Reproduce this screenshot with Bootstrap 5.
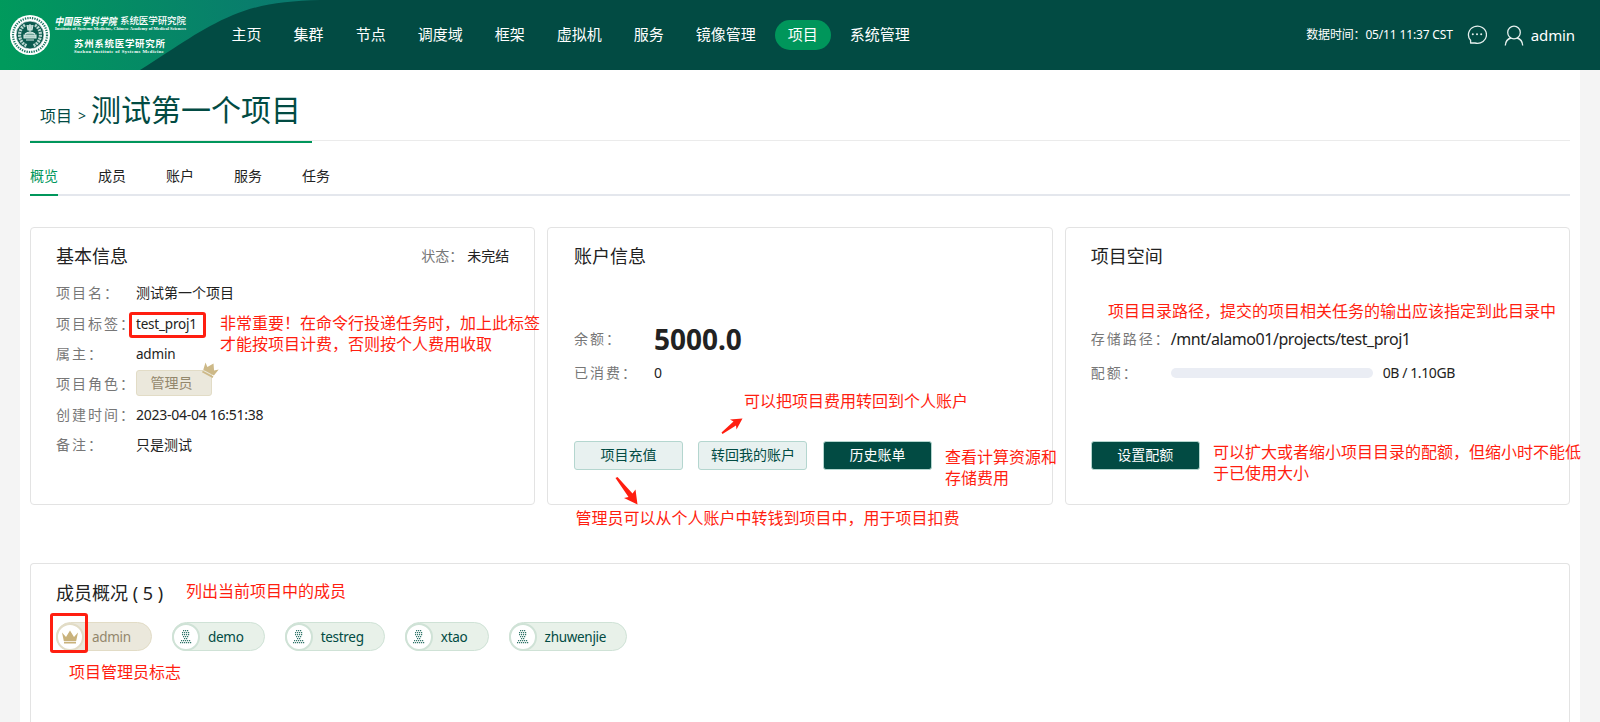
<!DOCTYPE html>
<html lang="zh-CN">
<head>
<meta charset="utf-8">
<meta name="viewport" content="width=device-width, initial-scale=1">
<title>测试第一个项目</title>
<link href="https://cdn.jsdelivr.net/npm/bootstrap@5.3.0/dist/css/bootstrap.min.css" rel="stylesheet">
<style>
body{font-family:"Noto Sans","Noto Sans CJK SC",sans-serif;font-size:14px;line-height:20px;color:#222;background:#f4f4f4;height:722px;overflow:hidden;position:relative}
.topbar{height:70px;background:#024b43;color:#fff}
.brand{width:218.6px;height:70px}
.brand svg{display:block;overflow:visible}
.mainnav{gap:6px;font-size:15px}
.mainnav .nav-link{color:#fff;padding:0 13px;height:30px;line-height:29px;border-radius:15px}
.mainnav .nav-link.active{background:#00965b}
.clock{font-size:12px;letter-spacing:-.16px}
.username{font-size:15px;letter-spacing:-.1px}
.userbar{padding-right:25px}
.page{margin:0 20px;padding:0 10px;background:#fff;height:652px}
.crumbs{height:71px;border-bottom:1px solid #ebebeb;color:#024b43}
.crumb-in{width:282px;height:73px;border-bottom:2px solid #00965b;padding:8px 0 0 10px}
.crumb-in .up{font-size:16px;line-height:20px;margin-top:12px}
.crumb-in .sep{font-size:14px;line-height:20px;margin:12px 5px 0 6px}
.crumb-in h1{font-size:30px;line-height:40px;font-weight:400;margin:1px 0 0}
.subtabs{height:55px;border-bottom:2px solid #e4e7ed;gap:40px}
.subtabs .nav-link{padding:0;height:55px;line-height:70px;color:#222;border-bottom:2px solid transparent}
.subtabs .nav-link.active{color:#00965b;border-color:#00965b}
.tiles{margin-top:31px;display:grid;grid-template-columns:repeat(3,1fr);column-gap:12px}
.tile{border:1px solid #e3e3e3;border-radius:4px;padding:0 25px;height:278px}
.tile h2{font-size:18px;line-height:24px;font-weight:400;margin:0}
.tilehead{height:50px;padding-top:6px}
.lbl{color:#777;letter-spacing:2px;width:80px;flex:none;white-space:nowrap}
.info .d-flex{height:30.4px}
.latin{font-size:13.5px;letter-spacing:-.2px}
.date{letter-spacing:-.27px}
.path{font-size:16px;letter-spacing:-.44px}
.size{letter-spacing:-.4px;margin-left:10px}
.role{width:76px;height:26px;background:#ebe8dc;border:1px solid #e2dcc6;border-radius:3px;color:#93876c;line-height:24px;text-align:center;position:relative;top:-1px;padding-right:5px}
.role svg{position:absolute;right:-8px;top:-10px}
.money{font-size:28px;font-weight:700}
.btn-x{--bs-btn-font-size:14px;--bs-btn-line-height:20px;--bs-btn-padding-y:0;--bs-btn-padding-x:0;--bs-btn-border-radius:3px;--bs-btn-border-color:#b4d6cf;--bs-btn-bg:#e8f1f0;--bs-btn-color:#024b43;width:109px;height:29px;padding-bottom:1px}
.btn-deep{--bs-btn-bg:#024b43;--bs-btn-color:#fff}
.actions{gap:15.5px;margin-top:51px}
.quota{width:202px;height:10px;border-radius:5px;background:#eaedf4;margin-top:-1px}
.account{padding-left:25.6px}
.team{margin-top:58px;height:160px;border-bottom:0}
.members{gap:20px}
.person{height:29px;border:1px solid #cfe2d6;border-radius:15px;background:#e8f1e9;color:#024b43;padding-right:20.2px;font-size:13.5px;letter-spacing:-.3px}
.person .face{width:28px;height:28px;margin-left:-1px;border:2px solid #cfe2d6;border-radius:50%;background:#fff;display:flex;align-items:center;justify-content:center;margin-right:8px}
.person.boss{background:#ebe8dc;border-color:#e2dcc6;color:#93876c}
.person.boss .face{border-color:#e2dcc6}
.note{position:absolute;color:#ff1e10;font-size:16px;line-height:21px;white-space:nowrap}
.ring{position:absolute;border:3px solid #ff1e10;border-radius:3px}
.arrow{position:absolute}
</style>
</head>
<body>
<header class="topbar d-flex align-items-center">
  <div class="brand flex-shrink-0">
    <svg width="320" height="70" viewBox="0 0 320 70">
      <defs><linearGradient id="g" gradientUnits="userSpaceOnUse" x1="0" y1="35" x2="280" y2="0"><stop offset="0" stop-color="#009a5c"/><stop offset="1" stop-color="#0a7a6e"/></linearGradient></defs>
      <path d="M0 0H320C285 1 260 4 233 15C200 29 180 45 140 70H0Z" fill="url(#g)"/>
      <circle cx="30" cy="35" r="20" fill="#fff"/>
      <circle cx="30" cy="35" r="17" fill="none" stroke="#1c7763" stroke-width="2.2" stroke-dasharray="1.3 1.1"/>
      <circle cx="30" cy="35" r="14" fill="#0b5a4e" stroke="#fff" stroke-width=".7"/>
      <path d="M25 25C17 30 18 42 27 46M35 25C43 30 42 42 33 46" fill="none" stroke="#b9d6cf" stroke-width="3.2" stroke-dasharray="2 .9"/>
      <path d="M27 25l1 5h4l1-5M30 24v8M24 35h12v3H24zM25 34q5-4 10 0M26 40h8" fill="#a9cdc4" stroke="#d5e8e3" stroke-width="1.1"/>
      <g fill="#fff" font-family="'Liberation Serif','Noto Sans CJK SC',serif">
        <text x="54.500" y="24.500" font-size="10" font-weight="700" font-style="italic" textLength="62" lengthAdjust="spacingAndGlyphs">中国医学科学院</text>
        <text x="120" y="24" font-size="9.500" font-weight="500" textLength="66">系统医学研究院</text>
        <text x="55" y="30" font-size="4.600" font-weight="700" textLength="131" lengthAdjust="spacingAndGlyphs">Institute of Systems Medicine, Chinese Academy of Medical Sciences</text>
        <text x="74" y="46.500" font-size="9.500" font-weight="700" textLength="91">苏州系统医学研究所</text>
        <text x="74" y="52.500" font-size="4.800" font-weight="700" textLength="90">Suzhou Institute of Systems Medicine</text>
      </g>
    </svg>
  </div>
  <nav class="nav mainnav position-relative">
    <a class="nav-link">主页</a><a class="nav-link">集群</a><a class="nav-link">节点</a><a class="nav-link">调度域</a><a class="nav-link">框架</a><a class="nav-link">虚拟机</a><a class="nav-link">服务</a><a class="nav-link">镜像管理</a><a class="nav-link active">项目</a><a class="nav-link">系统管理</a>
  </nav>
  <div class="userbar ms-auto d-flex align-items-center">
    <span class="clock">数据时间：05/11 11:37 CST</span>
    <svg width="20" height="20" viewBox="0 0 20 20" fill="none" stroke="#e6f0ee" stroke-width="1.300" style="margin-left:14px"><path d="M3.600 15.300A9 8.600 0 1 1 8 18H3.600Z" stroke-linejoin="round"/><g fill="#e6f0ee" stroke="none"><circle cx="5.800" cy="9.300" r="1"/><circle cx="10" cy="9.300" r="1"/><circle cx="14.200" cy="9.300" r="1"/></g></svg>
    <svg width="20" height="21" viewBox="0 0 20 21" fill="none" stroke="#e6f0ee" stroke-width="1.300" style="margin:0 7px 0 17px"><circle cx="10" cy="7.500" r="6.300"/><path d="M1.300 20.500C1.500 16.500 4 13.800 7 13M18.700 20.500C18.500 16.500 16 13.800 13 13"/></svg>
    <span class="username">admin</span>
  </div>
</header>

<main class="page">
  <div class="crumbs">
    <div class="crumb-in d-flex align-items-center">
      <span class="up">项目</span><span class="sep">&gt;</span><h1>测试第一个项目</h1>
    </div>
  </div>
  <nav class="nav subtabs">
    <a class="nav-link active">概览</a><a class="nav-link">成员</a><a class="nav-link">账户</a><a class="nav-link">服务</a><a class="nav-link">任务</a>
  </nav>

  <div class="tiles">
    <section class="tile">
      <div class="tilehead d-flex align-items-center justify-content-between">
        <h2>基本信息</h2>
        <div><span style="color:#777">状态：</span><span class="ms-1">未完结</span></div>
      </div>
      <div class="info">
        <div class="d-flex align-items-center"><span class="lbl">项目名：</span><span>测试第一个项目</span></div>
        <div class="d-flex align-items-center"><span class="lbl">项目标签：</span><span class="latin">test_proj1</span></div>
        <div class="d-flex align-items-center"><span class="lbl">属主：</span><span class="latin">admin</span></div>
        <div class="d-flex align-items-center"><span class="lbl">项目角色：</span><span class="role">管理员<svg width="18" height="17" viewBox="0 0 18 17"><g transform="rotate(28 9 9)" fill="#cdb988"><path d="M1.500 4.500l3.700 3L9 1.500l3.800 6 3.700-3-1.500 7.500H3zM3 13h12v1.800H3z"/></g></svg></span></div>
        <div class="d-flex align-items-center"><span class="lbl">创建时间：</span><span class="date">2023-04-04 16:51:38</span></div>
        <div class="d-flex align-items-center"><span class="lbl">备注：</span><span>只是测试</span></div>
      </div>
    </section>

    <section class="tile account">
      <div class="tilehead d-flex align-items-center"><h2>账户信息</h2></div>
      <div class="d-flex align-items-center" style="height:34px;margin-top:44px"><span class="lbl">余额：</span><span class="money">5000.0</span></div>
      <div class="d-flex align-items-center" style="height:34px"><span class="lbl">已消费：</span><span>0</span></div>
      <div class="actions d-flex"><button class="btn btn-x">项目充值</button><button class="btn btn-x">转回我的账户</button><button class="btn btn-x btn-deep">历史账单</button></div>
    </section>

    <section class="tile">
      <div class="tilehead d-flex align-items-center"><h2>项目空间</h2></div>
      <div class="d-flex align-items-center" style="height:34px;margin-top:44px"><span class="lbl">存储路径：</span><span class="path">/mnt/alamo01/projects/test_proj1</span></div>
      <div class="d-flex align-items-center" style="height:34px"><span class="lbl">配额：</span><div class="quota"></div><span class="size">0B / 1.10GB</span></div>
      <div class="actions d-flex"><button class="btn btn-x btn-deep">设置配额</button></div>
    </section>
  </div>

  <section class="tile team rounded-bottom-0">
    <div class="d-flex align-items-center" style="height:58px"><h2>成员概况 ( 5 )</h2></div>
    <div class="members d-flex">
      <div class="person boss d-flex align-items-center"><span class="face"><svg width="18" height="16" viewBox="0 0 18 16" fill="#c9b27c"><path d="M1 3.500l4 4.500L9 1.500l4 6.500 4-4.500-1.800 8.500H2.800zM3 12.800h12v1.600H3z"/></svg></span>admin</div>
      <div class="person d-flex align-items-center"><span class="face"><svg width="12" height="14"><use href="#u"/></svg></span>demo</div>
      <div class="person d-flex align-items-center"><span class="face"><svg width="12" height="14"><use href="#u"/></svg></span>testreg</div>
      <div class="person d-flex align-items-center"><span class="face"><svg width="12" height="14"><use href="#u"/></svg></span>xtao</div>
      <div class="person d-flex align-items-center"><span class="face"><svg width="12" height="14"><use href="#u"/></svg></span>zhuwenjie</div>
    </div>
  </section>
</main>

<!-- dotted user glyph shared by the member chips -->
<svg width="0" height="0" class="position-absolute"><defs>
  <g id="u" stroke="#2f7468" stroke-width="1.200" stroke-dasharray="1.200 .8" fill="none"><path d="M3 .6h5.200"/><path d="M2 2.600h7.200"/><path d="M2 4.600h7.200"/><path d="M3 6.600h5.200"/><path d="M4 8.600h3.200"/><path d="M1 10.600h9.200"/><path d="M0 12.600h11.200"/></g>
</defs></svg>

<!-- annotations laid over the page -->
<div class="ring" style="left:129px;top:312px;width:77px;height:26px"></div>
<div class="ring" style="left:50px;top:613px;width:38px;height:40px"></div>
<div class="note" style="left:220px;top:313px">非常重要！在命令行投递任务时，加上此标签<br>才能按项目计费，否则按个人费用收取</div>
<div class="note" style="left:744px;top:391px">可以把项目费用转回到个人账户</div>
<div class="note" style="left:575.500px;top:508px">管理员可以从个人账户中转钱到项目中，用于项目扣费</div>
<div class="note" style="left:945px;top:447px">查看计算资源和<br>存储费用</div>
<div class="note" style="left:1108px;top:301px">项目目录路径，提交的项目相关任务的输出应该指定到此目录中</div>
<div class="note" style="left:1213px;top:442px">可以扩大或者缩小项目目录的配额，但缩小时不能低<br>于已使用大小</div>
<div class="note" style="left:186px;top:581px">列出当前项目中的成员</div>
<div class="note" style="left:69px;top:662px">项目管理员标志</div>
<svg class="arrow" style="left:720px;top:417px" width="24" height="18" fill="#ff1e10"><path d="M1.500 15.500L13.500 4.500L10 2.500L22.500 1.500L16.500 12.500L16 8.500L2.500 17Z"/></svg>
<svg class="arrow" style="left:614px;top:476px" width="26" height="30" fill="#ff1e10"><path d="M1.500 2L3.500 1L18.500 17.500L21.500 13.500L23.500 28.500L10 22L14.500 21Z"/></svg>
<script src="https://cdn.jsdelivr.net/npm/bootstrap@5.3.0/dist/js/bootstrap.bundle.min.js"></script>
</body>
</html>
